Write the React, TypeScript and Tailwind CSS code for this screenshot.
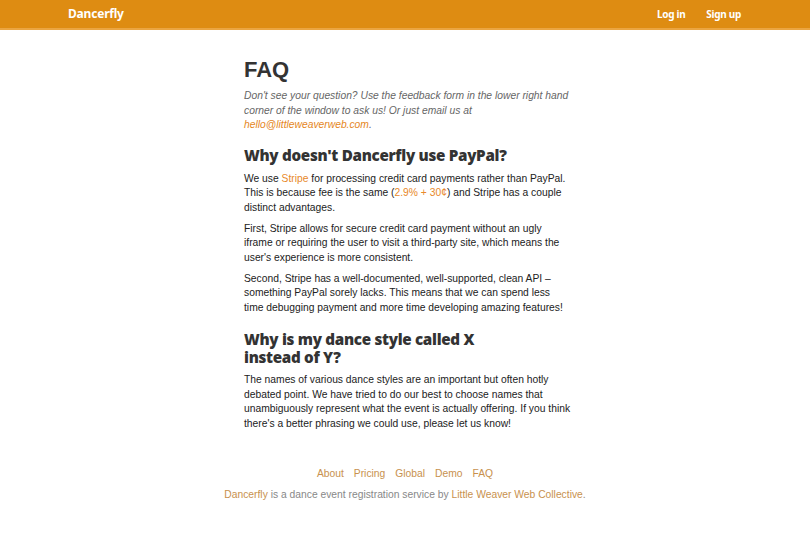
import React from "react";

const body = { fontFamily: '"Liberation Sans", Arial, sans-serif' };
const head = { fontFamily: '"Noto Sans", "DejaVu Sans", sans-serif' };

export default function App() {
  return (
    <div className="min-h-[536px] bg-white" style={body}>
      <header className="h-[30px] bg-[#de8c12] border-b-2 border-[#eba541] flex items-center justify-between pl-[68px] pr-[69px]">
        <div className="text-white text-[12px] font-bold tracking-[-0.2px]" style={head}>Dancerfly</div>
        <nav className="flex gap-[21px] text-white text-[10px] font-bold tracking-[-0.3px]" style={head}>
          <span>Log in</span>
          <span>Sign up</span>
        </nav>
      </header>
      <main className="w-[356px] mx-auto pl-[17px] pr-[11px] pt-[27px] text-[10.3px] leading-[14.7px] text-[#222]">
        <h1 className="text-[22px] font-bold leading-[26px] text-[#333]">FAQ</h1>
        <p className="mt-[6px] italic text-[#666] leading-[14.5px]">
          Don't see your question? Use the feedback form in the lower right hand corner of the window to ask us! Or just email us at{" "}
          <span className="text-[#e5861c]">hello@littleweaverweb.com</span>.
        </p>
        <h2 className="mt-[12px] text-[15.2px] font-black leading-[20px] tracking-[-0.3px] text-[#333]" style={head}>Why doesn't Dancerfly use PayPal?</h2>
        <p className="mt-[7px]">
          We use <span className="text-[#e8892a]">Stripe</span> for processing credit card payments rather than PayPal. This is because fee is the same (<span className="text-[#e8892a]">2.9% + 30¢</span>) and Stripe has a couple distinct advantages.
        </p>
        <p className="mt-[6px]">
          First, Stripe allows for secure credit card payment without an ugly iframe or requiring the user to visit a third-party site, which means the user's experience is more consistent.
        </p>
        <p className="mt-[6px]">
          Second, Stripe has a well-documented, well-supported, clean API – something PayPal sorely lacks. This means that we can spend less time debugging payment and more time developing amazing features!
        </p>
        <h2 className="mt-[14px] text-[15.2px] font-black leading-[18px] tracking-[-0.3px] text-[#333] w-[250px]" style={head}>Why is my dance style called X instead of Y?</h2>
        <p className="mt-[7px]">
          The names of various dance styles are an important but often hotly debated point. We have tried to do our best to choose names that unambiguously represent what the event is actually offering. If you think there's a better phrasing we could use, please let us know!
        </p>
      </main>
      <footer className="mt-[31px] text-center text-[10.3px] leading-[21px]">
        <div className="flex justify-center gap-[10px] text-[#c8914e]">
          <span>About</span><span>Pricing</span><span>Global</span><span>Demo</span><span>FAQ</span>
        </div>
        <div className="text-[#888]">
          <span className="text-[#c8914e]">Dancerfly</span> is a dance event registration service by <span className="text-[#c8914e]">Little Weaver Web Collective</span>.
        </div>
      </footer>
    </div>
  );
}
